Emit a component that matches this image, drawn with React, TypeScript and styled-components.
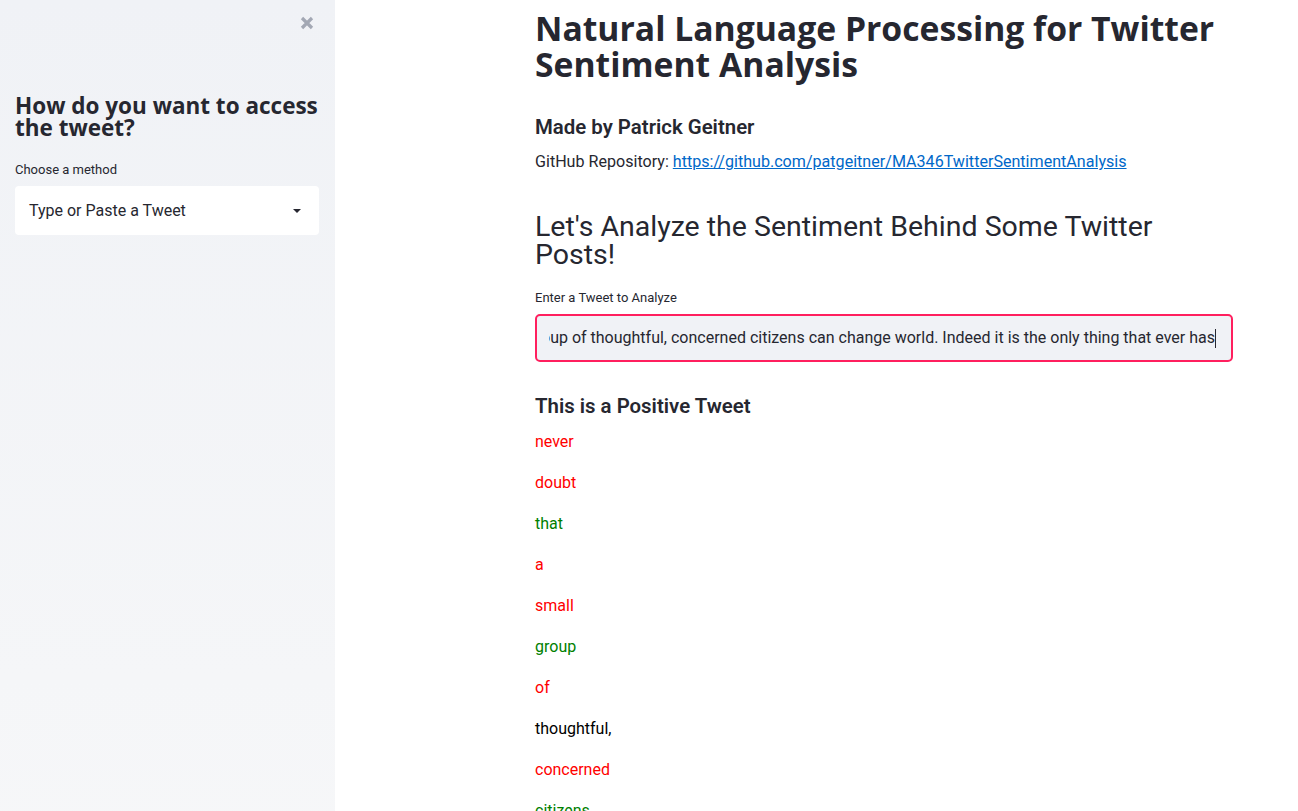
import React from 'react';
import styled, { createGlobalStyle } from 'styled-components';

const GlobalStyle = createGlobalStyle`
  html, body { margin: 0; padding: 0; background: #ffffff; }
  body { font-family: Roboto, "Liberation Sans", sans-serif; color: #262730; }
  * { box-sizing: border-box; }
`;

const Page = styled.div`
  display: flex;
  min-height: 811px;
`;

const Sidebar = styled.aside`
  width: 335px;
  flex-shrink: 0;
  min-height: 811px;
  background-image: linear-gradient(180deg, #f0f2f6, #fafafa);
  padding: 0 16px 0 15px;
  display: flex;
  flex-direction: column;
`;

const SidebarTop = styled.div`
  height: 46px;
  display: flex;
  align-items: center;
  justify-content: flex-end;
  padding-right: 5px;
`;

const CloseButton = styled.button`
  border: none;
  background: transparent;
  padding: 0;
  width: 14px;
  height: 14px;
  display: flex;
  align-items: center;
  justify-content: center;
  cursor: pointer;
`;

const SideHeading = styled.h2`
  margin: 49px 0 0;
  font-family: "Open Sans", Roboto, sans-serif;
  font-size: 22.5px;
  line-height: 22px;
  font-weight: 700;
  color: #262730;
`;

const FieldLabel = styled.label<{ $top: number }>`
  display: block;
  margin-top: ${p => p.$top}px;
  font-size: 13px;
  line-height: 16px;
  color: #262730;
`;

const SelectBox = styled.div`
  margin-top: 8px;
  height: 49px;
  background: #ffffff;
  border-radius: 4px;
  display: flex;
  align-items: center;
  justify-content: space-between;
  padding: 0 18px 0 14px;
  font-size: 16px;
  line-height: 20px;
  color: #262730;
`;

const Main = styled.main`
  flex: 1;
  padding: 10px 0 40px 200px;
`;

const Content = styled.div`
  width: 698px;
  display: flex;
  flex-direction: column;
`;

const Title = styled.h1`
  margin: 0;
  font-family: "Open Sans", Roboto, sans-serif;
  font-size: 33.7px;
  line-height: 36px;
  font-weight: 700;
  color: #262730;
`;

const SubHeading = styled.h3<{ $top: number }>`
  margin: ${p => p.$top}px 0 0;
  font-size: 20.4px;
  line-height: 24px;
  font-weight: 600;
  color: #262730;
`;

const Paragraph = styled.p`
  margin: 11px 0 0;
  font-size: 16.1px;
  line-height: 24px;
  color: #262730;
`;

const Link = styled.a`
  color: #0068c9;
  text-decoration: underline;
`;

const SectionHeading = styled.h2`
  margin: 39px 0 0;
  font-size: 28.5px;
  line-height: 28px;
  font-weight: 400;
  color: #262730;
`;

const InputBox = styled.div`
  margin-top: 8px;
  height: 48px;
  border: 2px solid #ff1f5e;
  border-radius: 5px;
  background: #f0f2f6;
  display: flex;
  align-items: center;
  padding: 0 15px 0 12px;
`;

const InputViewport = styled.div`
  flex: 1;
  overflow: hidden;
  display: flex;
  justify-content: flex-end;
  align-items: center;
  white-space: nowrap;
  font-size: 16px;
  line-height: 20px;
  color: #262730;
`;

const Caret = styled.span`
  display: inline-block;
  width: 1px;
  height: 19px;
  background: #262730;
  flex-shrink: 0;
`;

const WordList = styled.div`
  margin-top: 12px;
  display: flex;
  flex-direction: column;
  gap: 17px;
`;

const Word = styled.p<{ $color: string }>`
  margin: 0;
  font-size: 16px;
  line-height: 24px;
  color: ${p => p.$color};
`;

const words: [string, string][] = [
  ['never', 'red'],
  ['doubt', 'red'],
  ['that', 'green'],
  ['a', 'red'],
  ['small', 'red'],
  ['group', 'green'],
  ['of', 'red'],
  ['thoughtful,', 'black'],
  ['concerned', 'red'],
  ['citizens', 'green'],
  ['can', 'red'],
  ['change', 'green'],
  ['world.', 'black'],
  ['indeed', 'green'],
  ['it', 'red'],
  ['is', 'red'],
  ['the', 'red'],
  ['only', 'green'],
  ['thing', 'red'],
  ['that', 'green'],
  ['ever', 'green'],
  ['has', 'red'],
];

const tweet =
  'Never doubt that a small group of thoughtful, concerned citizens can change world. Indeed it is the only thing that ever has';

export default function App() {
  return (
    <>
      <GlobalStyle />
      <Page>
        <Sidebar>
          <SidebarTop>
            <CloseButton aria-label="Close sidebar">
              <svg width="14" height="14" viewBox="0 0 14 14">
                <path d="M2 2 L12 12 M12 2 L2 12" stroke="#a3a8b4" strokeWidth="3.2" strokeLinecap="butt" />
              </svg>
            </CloseButton>
          </SidebarTop>
          <SideHeading>How do you want to access the tweet?</SideHeading>
          <FieldLabel $top={23}>Choose a method</FieldLabel>
          <SelectBox>
            <span>Type or Paste a Tweet</span>
            <svg width="8" height="4" viewBox="0 0 8 4">
              <path d="M0 0 L8 0 L4 4 Z" fill="#262730" />
            </svg>
          </SelectBox>
        </Sidebar>
        <Main>
          <Content>
            <Title>Natural Language Processing for Twitter Sentiment Analysis</Title>
            <SubHeading $top={33}>Made by Patrick Geitner</SubHeading>
            <Paragraph>
              GitHub Repository:{' '}
              <Link href="#">https://github.com/patgeitner/MA346TwitterSentimentAnalysis</Link>
            </Paragraph>
            <SectionHeading>Let's Analyze the Sentiment Behind Some Twitter Posts!</SectionHeading>
            <FieldLabel $top={21}>Enter a Tweet to Analyze</FieldLabel>
            <InputBox>
              <InputViewport>
                <span>{tweet}</span>
                <Caret />
              </InputViewport>
            </InputBox>
            <SubHeading $top={32}>This is a Positive Tweet</SubHeading>
            <WordList>
              {words.map(([w, c], i) => (
                <Word key={i} $color={c}>
                  {w}
                </Word>
              ))}
            </WordList>
          </Content>
        </Main>
      </Page>
    </>
  );
}
